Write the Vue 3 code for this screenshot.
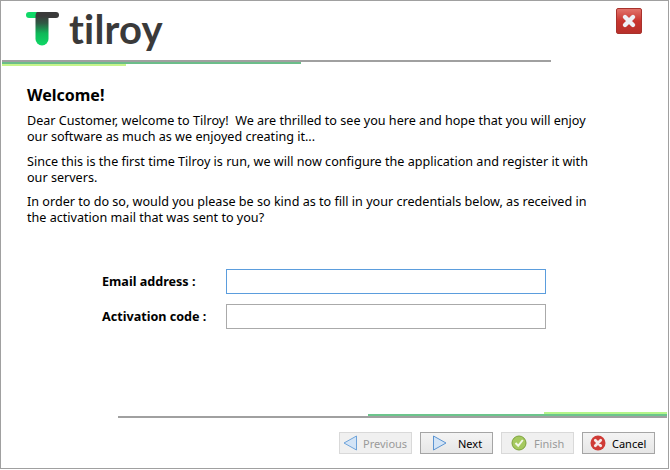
<script setup>
const paragraphs = [
  'Dear Customer, welcome to Tilroy!\u00a0 We are thrilled to see you here and hope that you will enjoy our software as much as we enjoyed creating it...',
  'Since this is the first time Tilroy is run, we will now configure the application and register it with our servers.',
  'In order to do so, would you please be so kind as to fill in your credentials below, as received in the activation mail that was sent to you?'
]
</script>

<template>
  <div class="window">
    <header class="head">
      <div class="brand">
        <svg class="mark" width="33" height="34" viewBox="0 0 33 34">
          <defs>
            <linearGradient id="stem" gradientUnits="userSpaceOnUse" x1="0" y1="4" x2="0" y2="33">
              <stop offset="0" stop-color="#3a3a3a"/>
              <stop offset="0.25" stop-color="#2f5a45"/>
              <stop offset="0.6" stop-color="#0fb858"/>
              <stop offset="1" stop-color="#0fd766"/>
            </linearGradient>
          </defs>
          <path d="M3 3H16" stroke="#10d868" stroke-width="6" stroke-linecap="round"/>
          <path d="M14 3H30" stroke="#3a3a3a" stroke-width="6" stroke-linecap="round"/>
          <path d="M16 4V27" stroke="url(#stem)" stroke-width="13" stroke-linecap="round"/>
        </svg>
        <span class="word">tilroy</span>
      </div>
      <button class="close" aria-label="Close">
        <svg width="16" height="16" viewBox="0 0 16 16"><path d="M4 4L12 12M12 4L4 12" stroke="#eef1f6" stroke-width="4.4" stroke-linecap="round"/></svg>
      </button>
    </header>

    <div class="rule-top">
      <div class="rule-gray"></div>
      <div class="rule-green"></div>
      <div class="rule-light"></div>
    </div>

    <main class="content">
      <h1>Welcome!</h1>
      <p v-for="(p, i) in paragraphs" :key="i">{{ p }}</p>
    </main>

    <form class="fields">
      <label class="field">
        <span>Email address :</span>
        <input class="focused" type="text" />
      </label>
      <label class="field">
        <span>Activation code :</span>
        <input type="text" />
      </label>
    </form>

    <div class="rule-bottom">
      <div class="rule-light-b"></div>
      <div class="rule-green-b"></div>
      <div class="rule-gray-b"></div>
    </div>

    <footer class="actions">
      <button class="btn off prev">
        <svg width="18" height="16" viewBox="0 0 18 16"><path d="M14.5 1V15L2 8Z" fill="#d3e4f6" stroke="#6ea3da" stroke-linejoin="round"/></svg>
        <span>Previous</span>
      </button>
      <button class="btn next">
        <svg width="18" height="16" viewBox="0 0 18 16"><path d="M3.5 1V15L16 8Z" fill="#d3e4f6" stroke="#5b94d2" stroke-linejoin="round"/></svg>
        <span>Next</span>
      </button>
      <button class="btn off finish">
        <svg width="16" height="16" viewBox="0 0 16 16"><circle cx="8" cy="8" r="7" fill="#a5c95f" stroke="#7da23c"/><path d="M4.5 8L7.2 10.8L11.8 5" fill="none" stroke="#f3f7ea" stroke-width="2"/></svg>
        <span>Finish</span>
      </button>
      <button class="btn cancel">
        <svg width="16" height="16" viewBox="0 0 16 16"><circle cx="8" cy="8" r="7.5" fill="#cf3b36"/><path d="M5.3 5.3L10.7 10.7M10.7 5.3L5.3 10.7" stroke="#f5e9e9" stroke-width="2.8" stroke-linecap="round"/></svg>
        <span>Cancel</span>
      </button>
    </footer>
  </div>
</template>

<style>
html, body { margin: 0; background: #fff; }
</style>

<style scoped>
.window {
  box-sizing: border-box;
  width: 669px;
  height: 469px;
  border: 1px solid #a0a0a0;
  background: #fff;
  font-family: "Noto Sans", "Open Sans", sans-serif;
  font-size: 12.6px;
  color: #000;
  display: flex;
  flex-direction: column;
}
.head {
  height: 59px;
  display: flex;
  justify-content: space-between;
  align-items: flex-start;
  padding: 7px 26px 0 25px;
  box-sizing: border-box;
}
.brand { display: flex; align-items: flex-start; gap: 10px; padding-top: 4px; }
.mark { display: block; }
.word {
  font-family: Lato, sans-serif;
  font-weight: 700;
  font-size: 40px;
  line-height: 40px;
  color: #3a3a3a;
  margin-top: -3px;
  letter-spacing: 0.2px;
}
.close {
  width: 26px;
  height: 26px;
  padding: 0;
  border: 1px solid #a8322c;
  border-radius: 2px;
  background: linear-gradient(#e2736b, #c8352f 50%, #b8302b);
  display: flex;
  align-items: center;
  justify-content: center;
}
.rule-top { width: 549px; margin-left: 1px; }
.rule-gray { height: 2px; background: #a0a0a0; }
.rule-green { height: 2px; width: 299px; background: #6cbd8a; }
.rule-light { height: 2px; width: 124px; background: #c6f58a; }
.content { padding: 19px 73px 0 26px; flex: 1; }
h1 { margin: 0 0 8px; font-size: 16px; line-height: 20px; font-weight: 700; }
p { margin: 0 0 8.5px; line-height: 16px; }
.fields { display: flex; flex-direction: column; gap: 10px; padding: 0 0 83px 101px; }
.field { display: flex; align-items: center; font-weight: 700; }
.field span { width: 124px; }
.field input {
  box-sizing: border-box;
  width: 320px;
  height: 25px;
  border: 1px solid #aaa;
  background: #fff;
  outline: none;
  margin: 0;
}
.field input.focused { border-color: #5b9ddd; }
.rule-bottom { position: relative; height: 6px; width: 549px; margin-left: 117px; }
.rule-gray-b { position: absolute; left: 0; right: 0; top: 4px; height: 2px; background: #a0a0a0; }
.rule-green-b { position: absolute; left: 250px; right: 0; top: 2px; height: 2px; background: #6cc58c; }
.rule-light-b { position: absolute; left: 426px; right: 0; top: 0; height: 2px; background: #b5f58a; }
.actions {
  display: flex;
  justify-content: flex-end;
  gap: 8px;
  padding: 14px 13px 14px 0;
}
.btn {
  box-sizing: border-box;
  width: 73px;
  height: 22px;
  border: 1px solid #a5a5a5;
  background: linear-gradient(#f4f4f4, #e6e6e6);
  font: inherit;
  font-size: 11px;
  color: #000;
  display: flex;
  align-items: center;
}
.prev { padding: 0 0 0 2px; gap: 3px; }
.next { padding: 0 0 0 9px; gap: 10px; }
.finish { padding: 0 0 0 9px; gap: 7px; }
.cancel { padding: 0 0 0 7px; gap: 6px; }
.btn.off { border-color: #d9d9d9; color: #9a9a9a; background: #f0f0f0; }
</style>
